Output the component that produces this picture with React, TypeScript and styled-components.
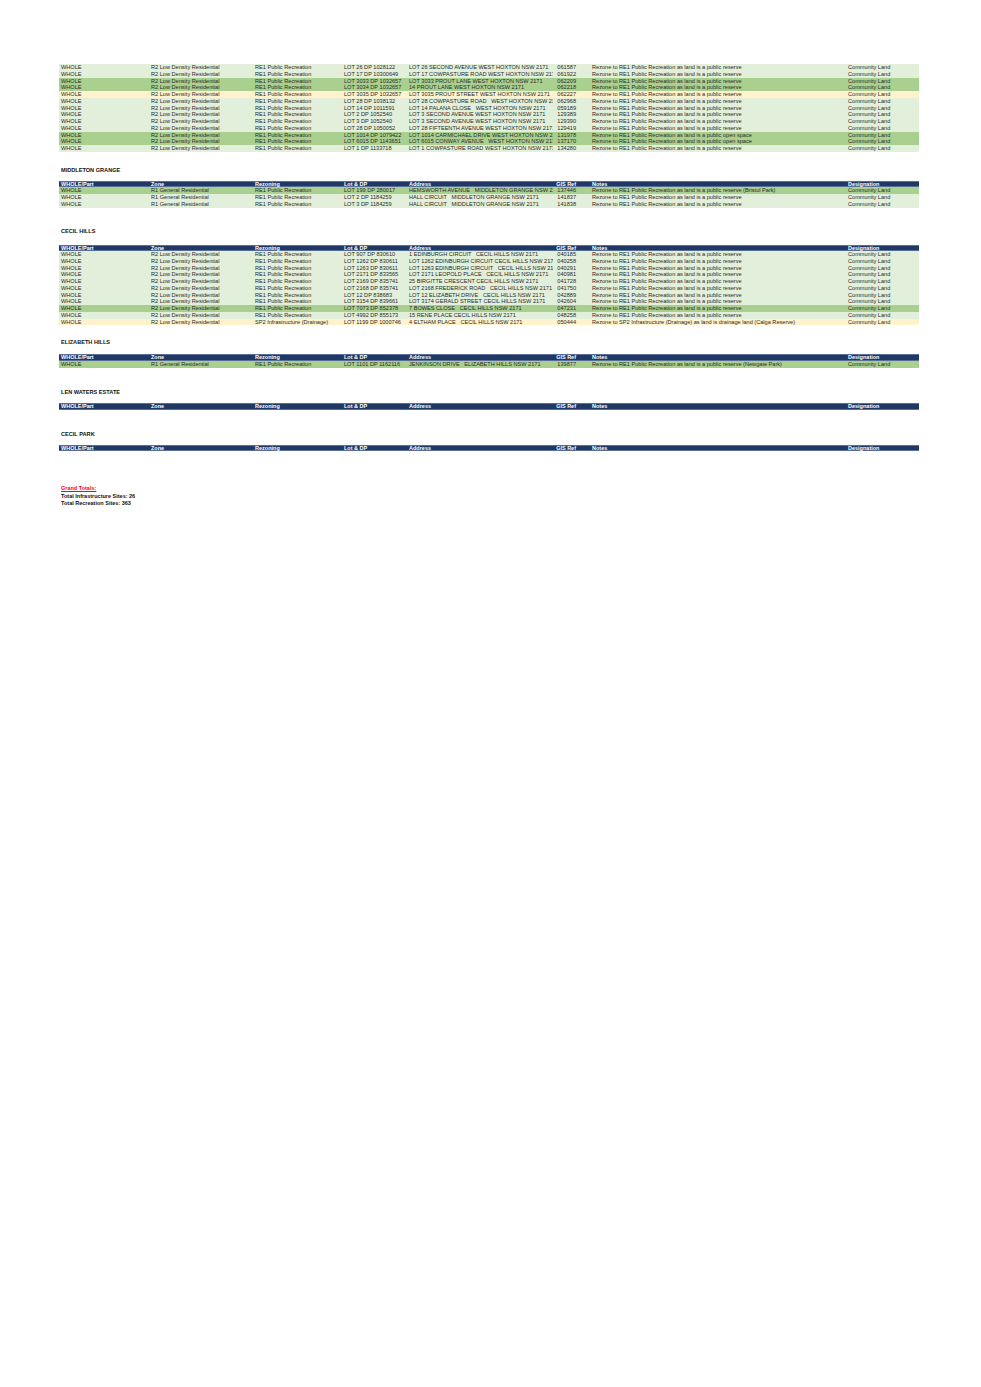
import React from 'react';
import styled, { createGlobalStyle } from 'styled-components';

const GlobalStyle = createGlobalStyle`
  html, body {
    margin: 0;
    padding: 0;
    background: #ffffff;
  }
  body {
    font-family: "Liberation Sans", Arial, Helvetica, sans-serif;
    color: #222222;
  }
`;

const COLS = '90px 104px 89px 65px 146px 37px 256px 73px';

const Page = styled.div`
  width: 981px;
  min-height: 1387px;
  box-sizing: border-box;
  padding: 64px 0 0 59px;
`;

const Sheet = styled.div`
  width: 860px;
`;

const Section = styled.div<{ $top: number }>`
  margin-top: ${p => p.$top}px;
`;

const Title = styled.div<{ $gap: number }>`
  font-size: 5.6px;
  line-height: 7px;
  font-weight: bold;
  color: #111111;
  padding-left: 2px;
  margin-bottom: ${p => p.$gap}px;
`;

const HeaderRow = styled.div`
  display: grid;
  grid-template-columns: ${COLS};
  height: 6.6px;
  background: #203864;
  box-shadow: inset 0 0.6px 0 #8fa3c8, inset 0 -0.6px 0 #8fa3c8;
  font-size: 5.5px;
  line-height: 6.6px;
  font-weight: bold;
  color: #ffffff;
`;

type Tone = 'light' | 'mid' | 'yellow';

const toneColor: Record<Tone, string> = {
  light: '#e2efda',
  mid: '#a9d08e',
  yellow: '#fff2cc',
};

const Row = styled.div<{ $tone: Tone }>`
  display: grid;
  grid-template-columns: ${COLS};
  height: 6.75px;
  background: ${p => toneColor[p.$tone]};
  font-size: 5.6px;
  line-height: 6.75px;
  color: #2a2a2a;
`;

const Cell = styled.div`
  padding: 0 2px;
  white-space: pre;
  overflow: hidden;
`;

const RefCell = styled(Cell)`
  text-align: right;
  padding-right: 14px;
  overflow: visible;
`;

const Totals = styled.div`
  margin-top: 34px;
  padding-left: 2px;
  font-size: 5.5px;
  line-height: 7.4px;
  font-weight: bold;
  color: #111111;
`;

const GrandLabel = styled.div`
  color: #ff0000;
  text-decoration: underline;
`;

interface Site {
  zone?: string;
  rezoning?: string;
  lot: string;
  address: string;
  gis: string;
  notes?: string;
  tone: Tone;
}

const R2 = 'R2 Low Density Residential';
const R1 = 'R1 General Residential';
const RE1 = 'RE1 Public Recreation';
const RESERVE = 'Rezone to RE1 Public Recreation as land is a public reserve';
const OPEN = 'Rezone to RE1 Public Recreation as land is a public open space';

const westHoxton: Site[] = [
  { lot: 'LOT 26 DP 1028122', address: 'LOT 26 SECOND AVENUE WEST HOXTON NSW 2171', gis: '061587', tone: 'light' },
  { lot: 'LOT 17 DP 10300649', address: 'LOT 17 COWPASTURE ROAD WEST HOXTON NSW 2171', gis: '061922', tone: 'light' },
  { lot: 'LOT 3033 DP 1032657', address: 'LOT 3033 PROUT LANE WEST HOXTON NSW 2171', gis: '062209', tone: 'mid' },
  { lot: 'LOT 3034 DP 1032657', address: '14 PROUT LANE WEST HOXTON NSW 2171', gis: '062218', tone: 'mid' },
  { lot: 'LOT 3035 DP 1032657', address: 'LOT 3035 PROUT STREET WEST HOXTON NSW 2171', gis: '062227', tone: 'yellow' },
  { lot: 'LOT 28 DP 1038132', address: 'LOT 28 COWPASTURE ROAD   WEST HOXTON NSW 2171', gis: '062968', tone: 'light' },
  { lot: 'LOT 14 DP 1011591', address: 'LOT 14 PALANA CLOSE   WEST HOXTON NSW 2171', gis: '059189', tone: 'light' },
  { lot: 'LOT 2 DP 1052540', address: 'LOT 3 SECOND AVENUE WEST HOXTON NSW 2171', gis: '129389', tone: 'light' },
  { lot: 'LOT 3 DP 1052540', address: 'LOT 3 SECOND AVENUE WEST HOXTON NSW 2171', gis: '129390', tone: 'light' },
  { lot: 'LOT 28 DP 1050052', address: 'LOT 28 FIFTEENTH AVENUE WEST HOXTON NSW 2171', gis: '129419', tone: 'light' },
  { lot: 'LOT 1014 DP 1079422', address: 'LOT 1014 CARMICHAEL DRIVE WEST HOXTON NSW 2171', gis: '131978', notes: OPEN, tone: 'mid' },
  { lot: 'LOT 6015 DP 1143651', address: 'LOT 6015 CONWAY AVENUE   WEST HOXTON NSW 2171', gis: '137170', notes: OPEN, tone: 'mid' },
  { lot: 'LOT 1 DP 1133718', address: 'LOT 1 COWPASTURE ROAD WEST HOXTON NSW 2171', gis: '134280', tone: 'light' },
];

const middleton: Site[] = [
  { zone: R1, lot: 'LOT 199 DP 280017', address: 'HEMSWORTH AVENUE   MIDDLETON GRANGE NSW 2171', gis: '137446', notes: RESERVE + ' (Bristol Park)', tone: 'mid' },
  { zone: R1, lot: 'LOT 2 DP 1184259', address: 'HALL CIRCUIT   MIDDLETON GRANGE NSW 2171', gis: '141837', tone: 'light' },
  { zone: R1, lot: 'LOT 3 DP 1184259', address: 'HALL CIRCUIT   MIDDLETON GRANGE NSW 2171', gis: '141838', tone: 'light' },
];

const cecilHills: Site[] = [
  { lot: 'LOT 907 DP 830610', address: '1 EDINBURGH CIRCUIT   CECIL HILLS NSW 2171', gis: '040185', tone: 'light' },
  { lot: 'LOT 1262 DP 830611', address: 'LOT 1262 EDINBURGH CIRCUIT CECIL HILLS NSW 2171', gis: '040258', tone: 'light' },
  { lot: 'LOT 1263 DP 830611', address: 'LOT 1263 EDINBURGH CIRCUIT   CECIL HILLS NSW 2171', gis: '040291', tone: 'light' },
  { lot: 'LOT 2171 DP 833565', address: 'LOT 2171 LEOPOLD PLACE   CECIL HILLS NSW 2171', gis: '040981', tone: 'light' },
  { lot: 'LOT 2169 DP 835741', address: '25 BIRGITTE CRESCENT CECIL HILLS NSW 2171', gis: '041728', tone: 'light' },
  { lot: 'LOT 2168 DP 835741', address: 'LOT 2168 FREDERICK ROAD   CECIL HILLS NSW 2171', gis: '041750', tone: 'light' },
  { lot: 'LOT 12 DP 838683', address: 'LOT 12 ELIZABETH DRIVE   CECIL HILLS NSW 2171', gis: '042889', tone: 'light' },
  { lot: 'LOT 3154 DP 839661', address: 'LOT 3174 GERALD STREET CECIL HILLS NSW 2171', gis: '042604', tone: 'light' },
  { lot: 'LOT 7073 DP 852378', address: '7 BOWES CLOSE   CECIL HILLS NSW 2171', gis: '047231', tone: 'mid' },
  { lot: 'LOT 4992 DP 855173', address: '15 RENE PLACE CECIL HILLS NSW 2171', gis: '048258', tone: 'light' },
  {
    lot: 'LOT 1199 DP 1000746', address: '4 ELTHAM PLACE   CECIL HILLS NSW 2171', gis: '050444',
    rezoning: 'SP2 Infrastructure (Drainage)',
    notes: 'Rezone to SP2 Infrastructure (Drainage) as land is drainage land (Calga Reserve)',
    tone: 'yellow',
  },
];

const elizabethHills: Site[] = [
  { zone: R1, lot: 'LOT 1101 DP 1162116', address: 'JENKINSON DRIVE   ELIZABETH HILLS NSW 2171', gis: '139877', notes: RESERVE + ' (Newgate Park)', tone: 'mid' },
];

const Header: React.FC = () => (
  <HeaderRow>
    <Cell>WHOLE/Part</Cell>
    <Cell>Zone</Cell>
    <Cell>Rezoning</Cell>
    <Cell>Lot &amp; DP</Cell>
    <Cell>Address</Cell>
    <RefCell>GIS Ref</RefCell>
    <Cell>Notes</Cell>
    <Cell>Designation</Cell>
  </HeaderRow>
);

const SiteRow: React.FC<{ site: Site }> = ({ site }) => (
  <Row $tone={site.tone}>
    <Cell>WHOLE</Cell>
    <Cell>{site.zone || R2}</Cell>
    <Cell>{site.rezoning || RE1}</Cell>
    <Cell>{site.lot}</Cell>
    <Cell>{site.address}</Cell>
    <RefCell>{site.gis}</RefCell>
    <Cell>{site.notes || RESERVE}</Cell>
    <Cell>Community Land</Cell>
  </Row>
);

interface SuburbProps {
  name: string;
  top: number;
  gap: number;
  sites: Site[];
}

const Suburb: React.FC<SuburbProps> = ({ name, top, gap, sites }) => (
  <Section $top={top}>
    <Title $gap={gap}>{name}</Title>
    <Header />
    {sites.map(s => <SiteRow key={s.gis} site={s} />)}
  </Section>
);

const App: React.FC = () => (
  <>
    <GlobalStyle />
    <Page>
      <Sheet>
        {westHoxton.map(s => <SiteRow key={s.gis} site={s} />)}
        <Suburb name="MIDDLETON GRANGE" top={15} gap={7} sites={middleton} />
        <Suburb name="CECIL HILLS" top={20} gap={10} sites={cecilHills} />
        <Suburb name="ELIZABETH HILLS" top={14} gap={8} sites={elizabethHills} />
        <Suburb name="LEN WATERS ESTATE" top={21} gap={7.5} sites={[]} />
        <Suburb name="CECIL PARK" top={21.5} gap={6.5} sites={[]} />
        <Totals>
          <GrandLabel>Grand Totals:</GrandLabel>
          <div>Total Infrastructure Sites: 26</div>
          <div>Total Recreation Sites: 363</div>
        </Totals>
      </Sheet>
    </Page>
  </>
);

export default App;
